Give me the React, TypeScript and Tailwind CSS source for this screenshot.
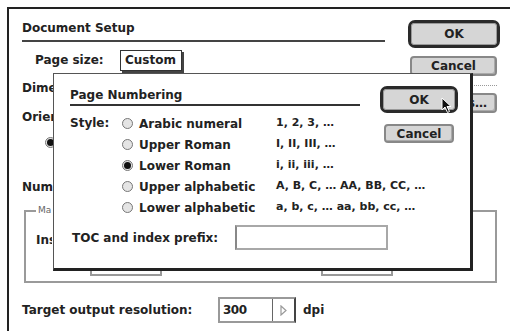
import React from 'react';

const styles = [
  { name: 'Arabic numeral', sample: '1, 2, 3, …', on: false },
  { name: 'Upper Roman', sample: 'I, II, III, …', on: false },
  { name: 'Lower Roman', sample: 'i, ii, iii, …', on: true },
  { name: 'Upper alphabetic', sample: 'A, B, C, … AA, BB, CC, …', on: false },
  { name: 'Lower alphabetic', sample: 'a, b, c, … aa, bb, cc, …', on: false },
];

function Radio({ on }: { on: boolean }) {
  return (
    <span className="w-[11px] h-[11px] rounded-full border border-[#777] bg-[#e4e4e4] flex items-center justify-center shrink-0">
      {on && <span className="w-[7px] h-[7px] rounded-full bg-[#111]" />}
    </span>
  );
}

function Button({ label, className = '' }: { label: string; className?: string }) {
  return (
    <div
      className={`flex items-center justify-center bg-[#d6d6d6] border-2 border-[#888] rounded-[4px] shadow-[inset_-1px_-1px_0_#aaa] shrink-0 ${className}`}
    >
      {label}
    </div>
  );
}

function DefaultButton({ label, className = '' }: { label: string; className?: string }) {
  return (
    <div className={`border-[3px] border-[#2a2a2a] rounded-[7px] bg-[#d6d6d6] flex items-center justify-center shrink-0 ${className}`}>
      <span className="border border-[#999] rounded-[3px] w-full h-full flex items-center justify-center">{label}</span>
    </div>
  );
}

function Cursor() {
  return (
    <svg className="absolute left-[441px] top-[97px] z-30" width="12" height="17" viewBox="0 0 12 17">
      <path d="M1 1 L1 13 L4 10 L6.5 15.5 L8.5 14.5 L6 9.5 L10 9.5 Z" fill="#111" stroke="#fff" strokeWidth="1" />
    </svg>
  );
}

function PageNumbering() {
  return (
    <div className="absolute left-[53px] top-[73px] z-20 w-[420px] h-[198px] bg-white border-l border-t border-[#555] border-r-[3px] border-b-[3px] border-r-[#222] border-b-[#222] pl-[16px] pt-[11px] flex">
      <div className="w-[290px] shrink-0 whitespace-nowrap">
        <div className="h-[21px] leading-[20px] border-b-2 border-[#333]">Page Numbering</div>
        <div className="mt-[7px] flex">
          <div className="w-[52px] shrink-0 leading-[21px]">Style:</div>
          <div className="flex flex-col shrink-0">
            {styles.map((s) => (
              <div key={s.name} className="h-[21px] flex items-center">
                <Radio on={s.on} />
                <span className="ml-[6px] w-[137px] shrink-0">{s.name}</span>
                <span className="text-[11px] shrink-0">{s.sample}</span>
              </div>
            ))}
          </div>
        </div>
        <div className="mt-[7px] flex items-center h-[25px]">
          <span className="w-[165px] shrink-0 pl-[2px]">TOC and index prefix:</span>
          <div className="w-[153px] shrink-0 h-[25px] border-2 border-[#a8a8a8] border-l-[#888]" />
        </div>
      </div>
      <div className="ml-[20px] w-[78px] shrink-0 flex flex-col items-center">
        <DefaultButton label="OK" className="mt-[1px] w-[78px] h-[27px]" />
        <Button label="Cancel" className="mt-[11px] w-[70px] h-[19px]" />
      </div>
    </div>
  );
}

export default function App() {
  return (
    <div className="relative w-[510px] h-[331px] bg-white overflow-hidden font-['DejaVu_Sans',sans-serif] font-bold text-[12px] text-[#222]">
      <div className="ml-[7px] mt-[7px] h-[330px] border-l-2 border-t-2 border-[#222] pl-[13px] pt-[9px] flex">
        <div className="w-[363px] shrink-0 whitespace-nowrap">
          <div className="h-[24px] leading-[20px] border-b-2 border-[#444]">Document Setup</div>
          <div className="mt-[8px] h-[20px] flex items-center pl-[13px]">
            <span className="w-[85px] shrink-0">Page size:</span>
            <span className="h-[21px] w-[62px] shrink-0 border border-[#333] shadow-[2px_2px_0_#444] flex items-center pl-[4px]">Custom</span>
          </div>
          {/* rows hidden behind the Page Numbering dialog */}
          <div className="mt-[8px] h-[20px] w-[31px] overflow-hidden flex items-center">Dimensions:</div>
          <div className="mt-[9px] h-[20px] w-[31px] overflow-hidden flex items-center">Orientation:</div>
          <div className="mt-[5px] h-[20px] flex items-center pl-[23px]">
            <Radio on={true} />
          </div>
          <div className="mt-[25px] h-[20px] w-[31px] overflow-hidden flex items-center">Number of pages:</div>
          <fieldset className="mt-[7px] ml-[2px] w-[473px] h-[79px] border-2 border-[#9a9a9a] px-[10px]">
            <legend className="px-[2px] text-[9px] font-normal text-[#666]">Ma</legend>
            <div className="mt-[12px] h-[20px] flex items-center">
              <span className="w-[16px] shrink-0 overflow-hidden">Inside:</span>
            </div>
            <div className="mt-[6px] flex">
              <span className="ml-[54px] w-[72px] shrink-0 h-[20px] border-2 border-[#999]" />
              <span className="ml-[159px] w-[72px] shrink-0 h-[20px] border-2 border-[#999]" />
            </div>
          </fieldset>
          <div className="mt-[14px] h-[26px] flex items-center">
            <span className="w-[196px] shrink-0">Target output resolution:</span>
            <div className="h-[26px] w-[78px] shrink-0 border-2 border-[#999] border-r-[#444] flex">
              <span className="w-[53px] shrink-0 border-r border-[#666] pl-[3px] leading-[22px] tracking-[-0.5px]">300</span>
              <span className="flex-1 flex items-center justify-center">
                <svg width="7" height="11" viewBox="0 0 7 11">
                  <path d="M1 1 L6 5.5 L1 10 Z" fill="none" stroke="#999" strokeWidth="1.2" />
                </svg>
              </span>
            </div>
            <span className="ml-[7px]">dpi</span>
          </div>
        </div>
        <div className="ml-[23px] w-[89px] shrink-0 flex flex-col">
          <DefaultButton label="OK" className="mt-[2px] w-[92px] h-[28px]" />
          <Button label="Cancel" className="mt-[8px] ml-[2px] w-[87px] h-[20px]" />
          <div className="mt-[9px] ml-[60px] border-t border-dotted border-[#999]" />
          <Button label="Numbers…" className="mt-[7px] ml-[2px] w-[87px] h-[20px] justify-end pr-[8px]" />
        </div>
      </div>
      <PageNumbering />
      <Cursor />
    </div>
  );
}
